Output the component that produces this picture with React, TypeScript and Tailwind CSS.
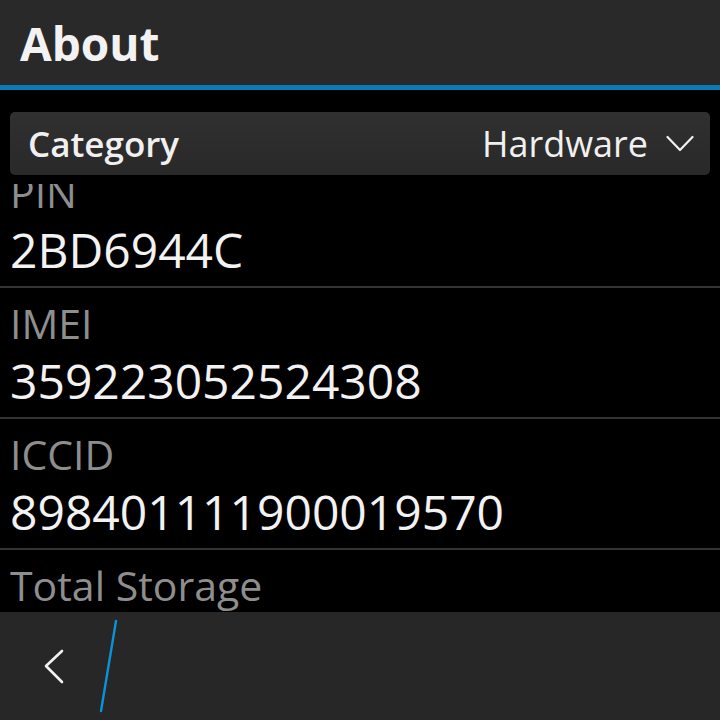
import React from "react";

const rows = [
  { label: "PIN", value: "2BD6944C" },
  { label: "IMEI", value: "359223052524308" },
  { label: "ICCID", value: "898401111900019570" },
  { label: "Total Storage", value: "16 GB" },
];

export default function App() {
  return (
    <div
      className="w-[720px] h-[720px] bg-black flex flex-col overflow-hidden"
      style={{ fontFamily: '"Open Sans", "Noto Sans", sans-serif' }}
    >
      <div className="h-[85px] shrink-0 bg-[#292929] flex items-center pl-[20px]">
        <span className="text-[46px] font-bold text-[#f2f2f2] leading-none">About</span>
      </div>
      <div className="h-[5px] shrink-0 bg-[#0a7bb3]" />
      <div className="flex-1 flex flex-col min-h-0">
        <div className="mt-[22px] mb-[9px] mx-[10px] h-[63px] shrink-0 rounded-[5px] bg-gradient-to-b from-[#303030] to-[#292929] flex items-center justify-between pl-[18px] pr-[16px]">
          <span className="text-[35px] font-semibold text-[#f0f0f0] leading-none">Category</span>
          <div className="flex items-center gap-[18px]">
            <span className="text-[36px] text-[#f0f0f0] leading-none">Hardware</span>
            <svg width="28" height="18" viewBox="0 0 28 18" fill="none">
              <path d="M1.5 2 L14 15 L26.5 2" stroke="#f0f0f0" strokeWidth="2.2" strokeLinecap="round" strokeLinejoin="round" />
            </svg>
          </div>
        </div>
        <div className="flex-1 min-h-0 overflow-hidden">
          <div className="mt-[-27px]">
            {rows.map((r) => (
              <div key={r.label} className="pt-[7px] pb-[8px] pl-[10px] border-b-2 border-[#333333]">
                <div className="h-[56px] text-[41px] leading-[56px] text-[#8e8e8e] whitespace-nowrap">{r.label}</div>
                <div className="mt-[2px] h-[56px] text-[48px] leading-[56px] text-[#f2f2f2] whitespace-nowrap">{r.value}</div>
              </div>
            ))}
          </div>
        </div>
      </div>
      <div className="h-[108px] shrink-0 bg-[#272727] relative">
        <svg className="absolute left-0 top-0" width="140" height="108" viewBox="0 0 140 108" fill="none">
          <path d="M62 39 L46 54 L62 70" stroke="#f2f2f2" strokeWidth="2.6" strokeLinecap="round" strokeLinejoin="round" />
          <path d="M116 9 L101 99" stroke="#0a93d6" strokeWidth="2.4" strokeLinecap="round" />
        </svg>
      </div>
    </div>
  );
}
